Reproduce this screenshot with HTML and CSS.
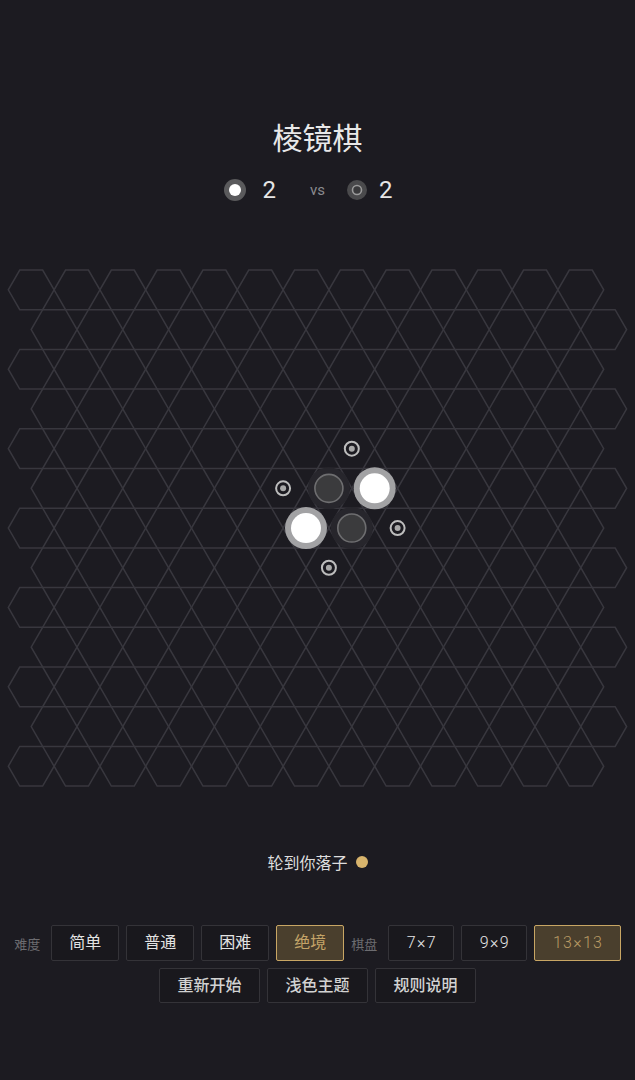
FILE: index.html
```html
<!DOCTYPE html>
<html lang="zh">
<head>
<meta charset="utf-8">
<title>棱镜棋</title>
<link rel="stylesheet" href="styles.css">
</head>
<body>
<div class="app">
  <h1 class="title">棱镜棋</h1>
  <div class="score">
    <div class="side side-left">
      <svg class="score-icon" width="24" height="24" viewBox="0 0 24 24"><circle cx="12" cy="12" r="11" fill="#5a5a5c"/><circle cx="12" cy="12" r="6" fill="#ffffff"/></svg>
      <span class="count count-left">2</span>
    </div>
    <span class="vs">vs</span>
    <div class="side side-right">
      <svg class="score-icon" width="22" height="22" viewBox="0 0 22 22"><circle cx="11" cy="11" r="10" fill="#4a4a4c"/><circle cx="11" cy="11" r="4.5" fill="#3a3a3c" stroke="#9a9a9a" stroke-width="1.6"/></svg>
      <span class="count count-right">2</span>
    </div>
  </div>
  <svg class="board" width="635" height="530" viewBox="0 0 635 530">
    <g id="grid" class="grid"></g>
    <g class="pieces">
      <circle cx="328.9" cy="223.35" r="21" fill="#27262c"/>
      <circle cx="328.9" cy="223.35" r="14" fill="#3b3b3d" stroke="#6e6e70" stroke-width="1.6"/>
      <circle cx="351.8" cy="263.05" r="21" fill="#27262c"/>
      <circle cx="351.8" cy="263.05" r="14" fill="#3b3b3d" stroke="#6e6e70" stroke-width="1.6"/>
      <circle cx="374.7" cy="223.35" r="21" fill="#a2a2a4"/>
      <circle cx="374.7" cy="223.35" r="15" fill="#ffffff"/>
      <circle cx="306" cy="263.05" r="21" fill="#a2a2a4"/>
      <circle cx="306" cy="263.05" r="15" fill="#ffffff"/>
      <circle cx="351.8" cy="183.65" r="7" fill="none" stroke="#bdbdbd" stroke-width="2"/>
      <circle cx="351.8" cy="183.65" r="3" fill="#a8a8a8"/>
      <circle cx="283.1" cy="223.35" r="7" fill="none" stroke="#bdbdbd" stroke-width="2"/>
      <circle cx="283.1" cy="223.35" r="3" fill="#a8a8a8"/>
      <circle cx="397.6" cy="263.05" r="7" fill="none" stroke="#bdbdbd" stroke-width="2"/>
      <circle cx="397.6" cy="263.05" r="3" fill="#a8a8a8"/>
      <circle cx="328.9" cy="302.75" r="7" fill="none" stroke="#bdbdbd" stroke-width="2"/>
      <circle cx="328.9" cy="302.75" r="3" fill="#a8a8a8"/>
    </g>
  </svg>
  <div class="status">
    <span>轮到你落子</span>
    <span class="turn-dot"></span>
  </div>
  <div class="controls">
    <div class="row">
      <span class="label">难度</span>
      <button class="btn">简单</button>
      <button class="btn">普通</button>
      <button class="btn">困难</button>
      <button class="btn active">绝境</button>
      <span class="label">棋盘</span>
      <button class="btn size">7×7</button>
      <button class="btn size">9×9</button>
      <button class="btn size active">13×13</button>
    </div>
    <div class="row">
      <button class="btn strong">重新开始</button>
      <button class="btn strong">浅色主题</button>
      <button class="btn strong">规则说明</button>
    </div>
  </div>
</div>
<script src="script.js"></script>
</body>
</html>
```

FILE: styles.css
```css
html, body {
  margin: 0;
  padding: 0;
  background: #1c1b21;
}
body {
  width: 635px;
  height: 1080px;
  overflow: hidden;
  font-family: "Roboto", "Noto Sans CJK SC", sans-serif;
  color: #e4e4e4;
}
.app {
  display: flex;
  flex-direction: column;
  align-items: center;
  padding-top: 116px;
}
.title {
  margin: 0;
  font-family: "Noto Sans CJK SC", sans-serif;
  font-size: 30px;
  line-height: 40px;
  font-weight: 400;
  color: #e8e8e8;
}
.score {
  margin-top: 19px;
  width: 100%;
  height: 30px;
  display: grid;
  grid-template-columns: 1fr auto 1fr;
  align-items: center;
}
.side {
  display: flex;
  align-items: center;
}
.side-left {
  justify-content: flex-end;
  padding-right: 34px;
}
.side-right {
  justify-content: flex-start;
  padding-left: 21px;
}
.score-icon {
  display: block;
}
.count {
  font-family: "Roboto", "Noto Sans", sans-serif;
  font-size: 24px;
  line-height: 30px;
  color: #e6e6e6;
}
.count-left {
  margin-left: 15px;
}
.count-right {
  margin-left: 11px;
}
.vs {
  font-family: "Roboto", "Noto Sans", sans-serif;
  font-size: 15px;
  color: #8a8a8e;
  line-height: 30px;
}
.board {
  display: block;
  margin-top: 60px;
}
.grid polygon {
  fill: none;
  stroke: #38373e;
  stroke-width: 1.5;
}
.status {
  margin-top: 55px;
  display: flex;
  align-items: center;
  gap: 8px;
  font-family: "Noto Sans CJK SC", sans-serif;
  font-size: 16px;
  line-height: 24px;
  color: #dedede;
}
.turn-dot {
  width: 12px;
  height: 12px;
  border-radius: 50%;
  background: #d8b46c;
}
.controls {
  margin-top: 51px;
  display: flex;
  flex-direction: column;
  align-items: center;
  gap: 7px;
}
.row {
  display: flex;
  align-items: center;
  gap: 7px;
}
.label {
  font-family: "Noto Sans CJK SC", sans-serif;
  font-size: 13px;
  color: #6c6c70;
  margin-right: 4px;
}
.btn {
  font-family: "Roboto", "Noto Sans CJK SC", sans-serif;
  font-size: 16px;
  height: 36px;
  padding: 0 17px;
  background: #19181d;
  border: 1px solid #343338;
  border-radius: 2px;
  color: #e2e2e2;
  line-height: 34px;
}
.btn.size {
  letter-spacing: 1.3px;
  padding: 0 16.5px 0 17.5px;
  font-weight: 300;
  color: #e6e6e6;
}
.btn.active {
  background: #4a3f2d;
  border-color: #c8a664;
  color: #c4a468;
}
.btn.size.active {
  color: #b89a64;
}
.btn.strong {
  height: 35px;
  padding: 0 17.5px;
  font-weight: 500;
  color: #d2d2d2;
}
```

FILE: script.js
```js
(function () {
  var g = document.getElementById('grid');
  var ns = 'http://www.w3.org/2000/svg';
  var R = 22.9;
  var H = R * 0.866;
  for (var r = 0; r < 13; r++) {
    var cy = 24.85 + r * 39.7;
    for (var c = 0; c < 13; c++) {
      var cx = 31.2 + c * 45.8 + (r % 2 ? 22.9 : 0);
      var pts = [
        [cx + R, cy], [cx + R / 2, cy + H], [cx - R / 2, cy + H],
        [cx - R, cy], [cx - R / 2, cy - H], [cx + R / 2, cy - H]
      ].map(function (p) { return p[0].toFixed(2) + ',' + p[1].toFixed(2); }).join(' ');
      var poly = document.createElementNS(ns, 'polygon');
      poly.setAttribute('points', pts);
      g.appendChild(poly);
    }
  }
})();
```
